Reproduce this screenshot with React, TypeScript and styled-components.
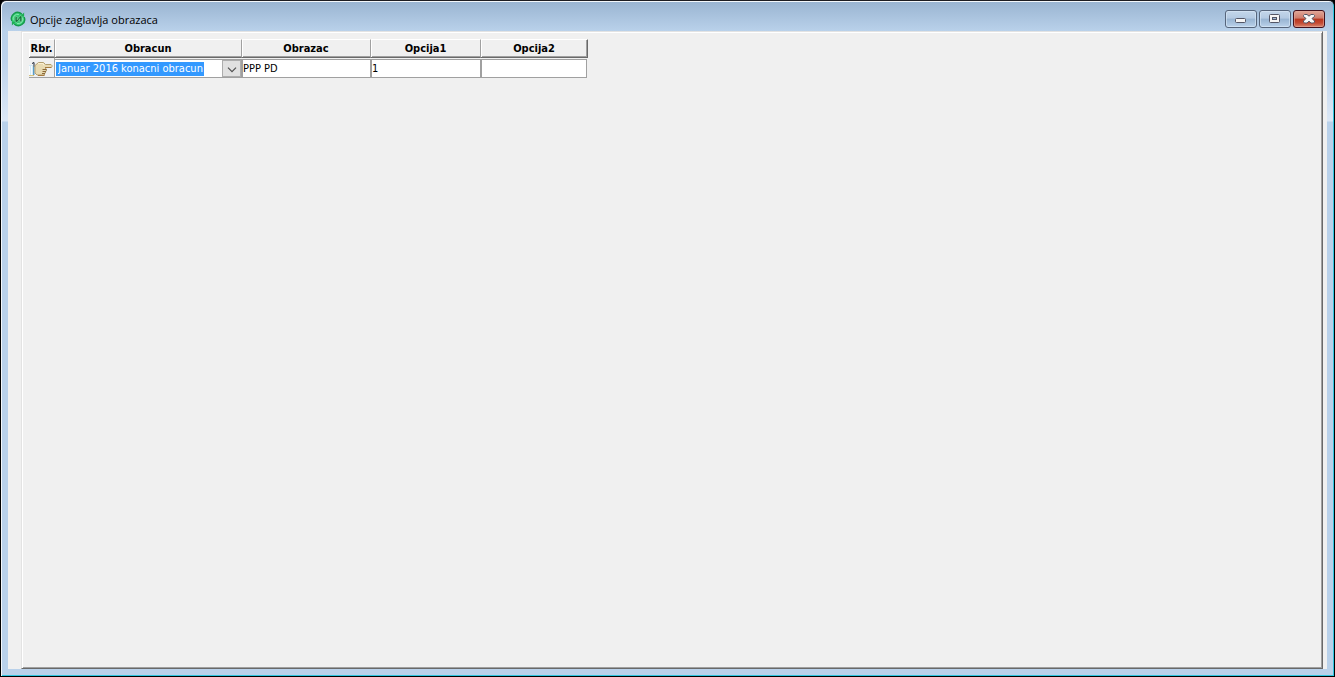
import React from "react";
import styled, { createGlobalStyle } from "styled-components";

const GlobalStyle = createGlobalStyle`
  *, *::before, *::after { box-sizing: border-box; }
  body { margin: 0; background: #000; }
  button, input, select { font: inherit; margin: 0; padding: 0; border: 0; border-radius: 0; }
  svg { display: block; }
`;

const uiFont = `"DejaVu Sans Condensed", "DejaVu Sans", sans-serif`;

const WindowFrame = styled.main`
  display: flex;
  flex-direction: column;
  min-height: 100vh;
  padding: 0 7px 7px;
  border: 1px solid #000;
  border-top-color: #1d1d22;
  border-radius: 6px 6px 0 0;
  background:
    linear-gradient(#99b4d1 0, #b9d1ea 30px, #bdd3ec 60px, #dbe7f5 118px, #dbe7f5 120px, #b9d1ea 121px, #b9d1ea);
  box-shadow: inset 1px 1px 0 #f3f7fb, inset -1px -1px 0 #2fc6e0;
  font-family: ${uiFont};
  font-size: 11px;
  color: #000;
`;

const TitleBar = styled.header`
  display: flex;
  align-items: center;
  gap: 4px;
  height: 30px;
  padding: 6px 2px 0;
`;

const Title = styled.h1`
  flex: 1;
  margin: 0;
  padding: 2px 0 0;
  font: 400 11px/16px "Open Sans", "Noto Sans", sans-serif;
`;

const WindowButtons = styled.div`
  display: flex;
  gap: 2px;
`;

const WindowButton = styled.button<{ $close?: boolean }>`
  display: flex;
  align-items: center;
  justify-content: center;
  width: 32px;
  height: 18px;
  border: 1px solid ${(p) => (p.$close ? "#43101b" : "#56657b")};
  border-radius: 3px;
  background: ${(p) =>
    p.$close
      ? "linear-gradient(#e0a698, #cf7b6b 45%, #b8361f 50%, #c44a33 75%, #d88670)"
      : "linear-gradient(#c3d6ea, #b4cae2 45%, #98b4d2 50%, #a8c2dd 75%, #bdd4ec)"};
  box-shadow: inset 0 0 0 1px ${(p) => (p.$close ? "#e3a79a99" : "#dbe9f799")};
`;

const Client = styled.div`
  flex: 1;
  display: flex;
  padding: 0 4px 0 13px;
  background: #f0f0f0;
`;

const Panel = styled.section`
  flex: 1;
  padding: 7px;
  border: 1px solid;
  border-color: #e3e3e3 #696969 #696969 #e3e3e3;
  box-shadow: inset 1px 1px 0 #fff, inset -1px -1px 0 #a0a0a0;
`;

const Grid = styled.table`
  table-layout: fixed;
  width: 559px;
  border-collapse: separate;
  border-spacing: 0;
`;

const Column = styled.col<{ $width: number }>`
  width: ${(p) => p.$width}px;
`;

const HeadCell = styled.th`
  height: 19px;
  padding: 0;
  border-top: 1px solid #fff;
  border-right: 1px solid #a0a0a0;
  border-bottom: 1px solid #696969;
  box-shadow: inset 1px 0 0 #fff, inset 0 -1px 0 #a0a0a0;
  font-weight: 700;
  line-height: 16px;
  text-align: center;
  white-space: nowrap;

  &:last-child {
    border-right-color: #696969;
    box-shadow: inset 1px 0 0 #fff, inset -1px -1px 0 #a0a0a0;
  }
`;

const MarkerCell = styled.td`
  padding: 2px 0 0;
  border-right: 1px solid #a0a0a0;
  border-bottom: 1px solid #a0a0a0;
`;

const Cell = styled.td`
  height: 20px;
  padding: 1px 0 0;

  &:last-child { padding-right: 1px; }
`;

const CellInput = styled.input`
  display: block;
  width: 100%;
  height: 19px;
  padding: 0 1px;
  border: 1px solid #a0a0a0;
  border-left: 0;
  background: #fff;
  box-shadow: inset 1px 0 0 #a0a0a0;
  color: #000;
  outline: 0;
`;

const Combo = styled.label`
  display: flex;
  align-items: flex-end;
  height: 19px;
  padding-left: 1px;
  border: 1px solid #a0a0a0;
  border-left: 0;
  background: #fff;
`;

const ComboSelect = styled.select`
  appearance: none;
  width: 148px;
  height: 14px;
  margin-bottom: 1px;
  padding-left: 2px;
  background: #3399ff;
  color: #fff;
  line-height: 14px;
  outline: 0;
`;

const ComboArrow = styled.span`
  display: flex;
  align-items: center;
  justify-content: center;
  width: 19px;
  height: 17px;
  margin-left: auto;
  padding-top: 2px;
  border: 1px solid #adadad;
  background: #e1e1e1;
`;

const AppIcon = () => (
  <svg width="16" height="16" viewBox="-0.5 -0.5 17 17" aria-hidden="true">
    <circle cx="8" cy="8" r="7" fill="#35c873" />
    <path d="M1.500 10A6.500 6.500 0 0 1 12 2.800" fill="none" stroke="#159a4a" strokeWidth="1.500" />
    <path d="M14.500 6A6.500 6.500 0 0 1 4 13.200" fill="none" stroke="#159a4a" strokeWidth="1.500" />
    <path d="M14.500 1V5h-4ZM1.500 15V11h4Z" fill="#1eab55" />
    <path d="M3 9.500A5 5 0 0 1 9 3.100M13 6.500A5 5 0 0 1 7 12.900" fill="none" stroke="#8df0b3" />
    <path d="M5 11V6l2-1v4l3.500-4.500L12 5v5l-2 1.500V7.500L7 11.500Z" fill="#12703a" stroke="#b3f4ca" strokeWidth=".4" />
  </svg>
);

const MinimizeIcon = () => (
  <svg width="12" height="12" viewBox="0 0 12 12" aria-hidden="true">
    <rect x=".5" y="5.500" width="10" height="4" rx="1" fill="#f5f5f5" stroke="#535666" />
  </svg>
);

const MaximizeIcon = () => (
  <svg width="12" height="10" viewBox="0 0 12 10" aria-hidden="true">
    <rect x=".5" y=".5" width="10" height="8" rx="1" fill="#f5f5f5" stroke="#535666" />
    <rect x="3.500" y="3.500" width="4" height="2" fill="#9db8d5" stroke="#535666" />
  </svg>
);

const CloseIcon = () => (
  <svg width="12" height="10" viewBox="0 0 12 10" aria-hidden="true">
    <path
      d="M1.500.5h2.500L6 2.200 8 .5h2.500l1 1v1L9 4.500l2.500 2.500v1l-1 1H8L6 7.200 4 9H1.500l-1-1V7L3 4.500.5 2.500v-1Z"
      fill="#f8f8f8"
      stroke="#535666"
    />
  </svg>
);

const HandIcon = () => (
  <svg width="24" height="17" viewBox="0 0 24 17" role="img" aria-label="Aktivni red">
    <path d="M0 5h5v10H0Z" fill="#d3e9f5" />
    <path d="M.5 6v9M2.500 6v9" stroke="#f6fbff" />
    <path d="M0 15.500h5" stroke="#d8c27c" />
    <path d="M4 7h1.500v8H4Z" fill="#5b9cc6" />
    <path d="M3 3.500l2-1V7" fill="none" stroke="#1d2738" />
    <path
      d="M6 5.500L9.500 2.500h5L16.500 4.500H22l1 1v1l-1 1h-5.500v1.500h1v2h-1v2h-1v2H8l-2-2Z"
      fill="#e8dab2"
      stroke="#b39f70"
    />
    <path d="M9 3.500h5l1 2" fill="none" stroke="#fbf0d2" />
    <path d="M13.500 9.500h4M13.500 11.500H17M13 13.500h3" stroke="#8d6a38" />
    <path d="M9 15.500h6.500M16 7.500h6.500" stroke="#a67a3f" />
  </svg>
);

const ChevronIcon = () => (
  <svg width="10" height="6" viewBox="0 0 10 6" aria-hidden="true">
    <path d="M1 .7l4 4 4-4" fill="none" stroke="#505050" strokeWidth="1.200" />
  </svg>
);

const columns = [
  { label: "Rbr.", width: 26 },
  { label: "Obracun", width: 187 },
  { label: "Obrazac", width: 129 },
  { label: "Opcija1", width: 110 },
  { label: "Opcija2", width: 107 },
];

export default function App() {
  return (
    <>
      <GlobalStyle />
      <WindowFrame>
        <TitleBar>
          <AppIcon />
          <Title>Opcije zaglavlja obrazaca</Title>
          <WindowButtons>
            <WindowButton type="button" aria-label="Minimize"><MinimizeIcon /></WindowButton>
            <WindowButton type="button" aria-label="Maximize"><MaximizeIcon /></WindowButton>
            <WindowButton type="button" aria-label="Close" $close><CloseIcon /></WindowButton>
          </WindowButtons>
        </TitleBar>
        <Client>
          <Panel>
            <Grid>
              <colgroup>
                {columns.map((c) => <Column key={c.label} $width={c.width} />)}
              </colgroup>
              <thead>
                <tr>
                  {columns.map((c) => <HeadCell key={c.label} scope="col">{c.label}</HeadCell>)}
                </tr>
              </thead>
              <tbody>
                <tr>
                  <MarkerCell><HandIcon /></MarkerCell>
                  <Cell>
                    <Combo>
                      <ComboSelect aria-label="Obracun" defaultValue="2016-01">
                        <option value="2016-01">Januar 2016 konacni obracun</option>
                      </ComboSelect>
                      <ComboArrow><ChevronIcon /></ComboArrow>
                    </Combo>
                  </Cell>
                  <Cell><CellInput aria-label="Obrazac" defaultValue="PPP PD" /></Cell>
                  <Cell><CellInput aria-label="Opcija1" defaultValue="1" /></Cell>
                  <Cell><CellInput aria-label="Opcija2" defaultValue="" /></Cell>
                </tr>
              </tbody>
            </Grid>
          </Panel>
        </Client>
      </WindowFrame>
    </>
  );
}
